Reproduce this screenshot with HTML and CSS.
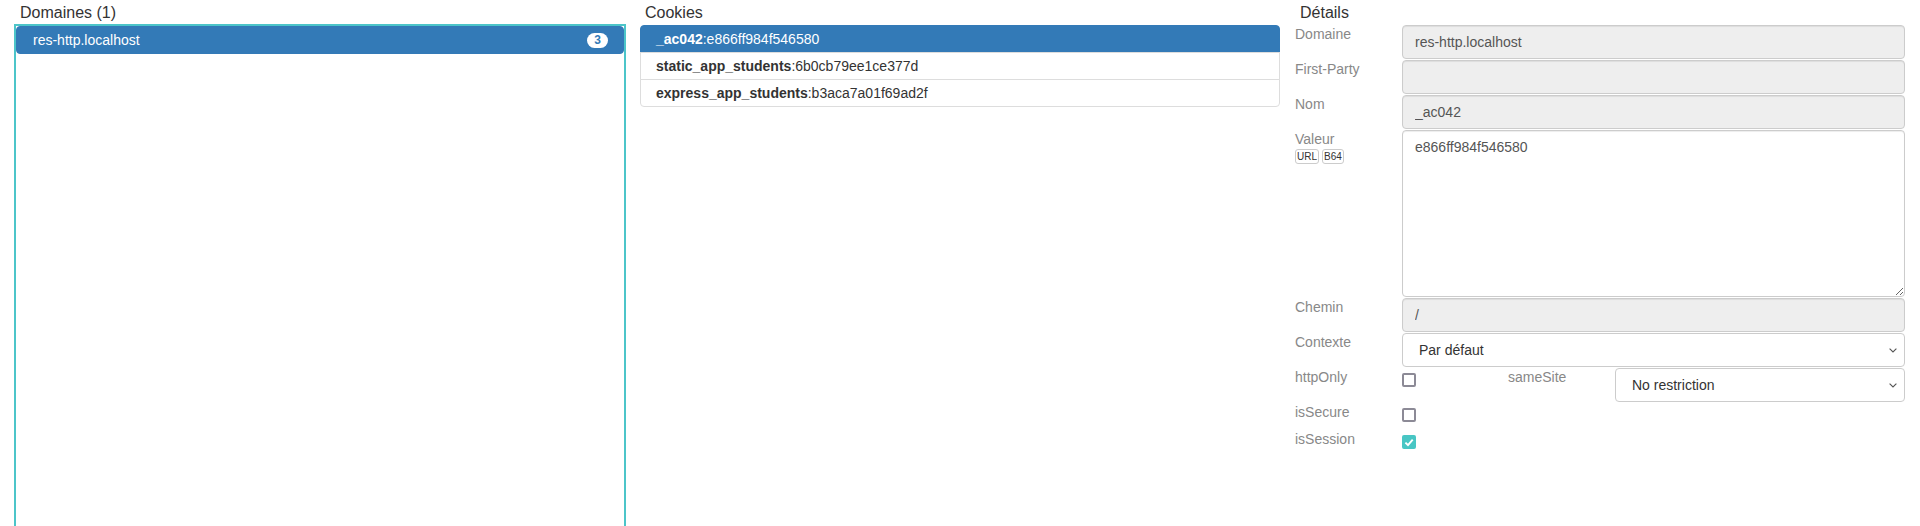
FILE: index.html
```html
<!DOCTYPE html>
<html lang="fr">
<head>
<meta charset="utf-8">
<title>Cookies</title>
<link rel="stylesheet" href="styles.css">
</head>
<body>
<div class="layout">
  <section class="col col-domains">
    <h2 class="col-title">Domaines (1)</h2>
    <div class="domain-box">
      <div class="list-item active domain-item">
        <span>res-http.localhost</span>
        <span class="badge">3</span>
      </div>
    </div>
  </section>

  <section class="col col-cookies">
    <h2 class="col-title">Cookies</h2>
    <div class="cookie-list">
      <div class="list-item active"><b>_ac042</b>:e866ff984f546580</div>
      <div class="list-item"><b>static_app_students</b>:6b0cb79ee1ce377d</div>
      <div class="list-item"><b>express_app_students</b>:b3aca7a01f69ad2f</div>
    </div>
  </section>

  <section class="col col-details">
    <h2 class="col-title">Détails</h2>
    <div class="form">
      <div class="row">
        <div class="lbl">Domaine</div>
        <input class="field readonly" readonly value="res-http.localhost">
      </div>
      <div class="row">
        <div class="lbl">First-Party</div>
        <input class="field readonly" readonly value="">
      </div>
      <div class="row">
        <div class="lbl">Nom</div>
        <input class="field readonly" readonly value="_ac042">
      </div>
      <div class="row">
        <div class="lbl">
          <div>Valeur</div>
          <div class="mini-btns"><span class="mini-btn">URL</span><span class="mini-btn">B64</span></div>
        </div>
        <textarea class="field area">e866ff984f546580</textarea>
      </div>
      <div class="row">
        <div class="lbl">Chemin</div>
        <input class="field readonly" readonly value="/">
      </div>
      <div class="row">
        <div class="lbl">Contexte</div>
        <div class="field select"><span>Par défaut</span><svg class="chev" width="8" height="5" viewBox="0 0 8 5"><polyline points="0.6,0.6 4,4 7.4,0.6" fill="none" stroke="#555" stroke-width="1.1"/></svg></div>
      </div>
      <div class="row row-4">
        <div class="lbl">httpOnly</div>
        <div class="cb-cell"><span class="cb"></span></div>
        <div class="lbl">sameSite</div>
        <div class="field select"><span>No restriction</span><svg class="chev" width="8" height="5" viewBox="0 0 8 5"><polyline points="0.6,0.6 4,4 7.4,0.6" fill="none" stroke="#555" stroke-width="1.1"/></svg></div>
      </div>
      <div class="row row-cb">
        <div class="lbl">isSecure</div>
        <div class="cb-cell"><span class="cb"></span></div>
      </div>
      <div class="row row-cb">
        <div class="lbl">isSession</div>
        <div class="cb-cell"><span class="cb checked"><svg width="10" height="9" viewBox="0 0 10 9"><polyline points="1.4,4.6 4,7.2 8.7,1.6" fill="none" stroke="#fff" stroke-width="1.9"/></svg></span></div>
      </div>
    </div>
  </section>
</div>
</body>
</html>
```

FILE: styles.css
```css
html, body {
  margin: 0;
  padding: 0;
  background: #fff;
  overflow: hidden;
}

body {
  font-family: "Liberation Sans", Arial, Helvetica, sans-serif;
  font-size: 14px;
  line-height: 20px;
  color: #333;
}

.layout {
  display: grid;
  grid-template-columns: 640px 640px 640px;
  height: 526px;
  overflow: hidden;
}

.col {
  overflow: hidden;
}

.col-title {
  margin: 0 0 1px 0;
  padding: 3px 0 0 0;
  font-size: 16px;
  line-height: 20px;
  font-weight: normal;
  color: #333;
}

/* Domains column */
.col-domains {
  padding: 0 14px;
}
.col-domains .col-title {
  padding-left: 6px;
}
.domain-box {
  border: 2px solid #4cc5c9;
  border-bottom: none;
  height: 502px;
  box-sizing: border-box;
}

.list-item {
  padding: 3px 15px;
  line-height: 20px;
  border: 1px solid #ddd;
  margin-bottom: -1px;
  background: #fff;
}
.list-item.active {
  background: #337ab7;
  border-color: #337ab7;
  color: #fff;
}
.domain-item {
  border-radius: 4px;
  display: flex;
  justify-content: space-between;
  align-items: center;
  padding-left: 16px;
}
.badge {
  background: #fff;
  color: #337ab7;
  font-size: 12px;
  font-weight: bold;
  line-height: 13px;
  padding: 1px 7px;
  border-radius: 8px;
}

/* Cookies column */
.col-cookies .col-title {
  padding-left: 5px;
}
.cookie-list {
  margin-top: 2px;
  border-radius: 4px;
}
.cookie-list .list-item:first-child {
  border-top-left-radius: 4px;
  border-top-right-radius: 4px;
}
.cookie-list .list-item:last-child {
  border-bottom-left-radius: 4px;
  border-bottom-right-radius: 4px;
}
.cookie-list b {
  font-weight: bold;
}

/* Details column */
.col-details {
  padding: 0 15px;
}
.col-details .col-title {
  padding-left: 5px;
}
.form {
  margin-top: 2px;
}
.row {
  display: grid;
  grid-template-columns: 107px 1fr;
  margin-bottom: 1px;
}
.row-4 {
  grid-template-columns: 107px 106px 107px 1fr;
}
.row-cb {
  height: 26px;
}
.lbl {
  color: #888;
  line-height: 18px;
  font-size: 14px;
}
.mini-btns {
  display: flex;
  gap: 3px;
  margin-top: 1px;
}
.mini-btn {
  font-size: 10px;
  line-height: 13px;
  color: #333;
  border: 1px solid #ccc;
  border-radius: 3px;
  padding: 0 1px;
  background: #fff;
}

.field {
  box-sizing: border-box;
  height: 34px;
  width: 100%;
  margin: 0;
  padding: 6px 12px;
  font-family: "Liberation Sans", Arial, Helvetica, sans-serif;
  font-size: 14px;
  line-height: 20px;
  color: #555;
  background: #fff;
  border: 1px solid #ccc;
  border-radius: 4px;
  box-shadow: inset 0 1px 1px rgba(0, 0, 0, 0.075);
  outline: none;
}
.field.readonly {
  background: #eee;
}
.field.area {
  height: 167px;
  resize: vertical;
  display: block;
}
.field.select {
  display: flex;
  align-items: center;
  justify-content: space-between;
  padding: 0 7px 0 16px;
  color: #333;
  box-shadow: none;
}
.chev {
  display: block;
}

.cb-cell {
  padding-top: 5px;
}
.cb {
  display: block;
  box-sizing: border-box;
  width: 14px;
  height: 14px;
  border: 2px solid #8c8a96;
  border-radius: 2px;
  background: #fff;
}
.cb.checked {
  background: #48c6c4;
  border-color: #48c6c4;
  display: flex;
  align-items: center;
  justify-content: center;
}
.cb.checked svg {
  display: block;
}
```
